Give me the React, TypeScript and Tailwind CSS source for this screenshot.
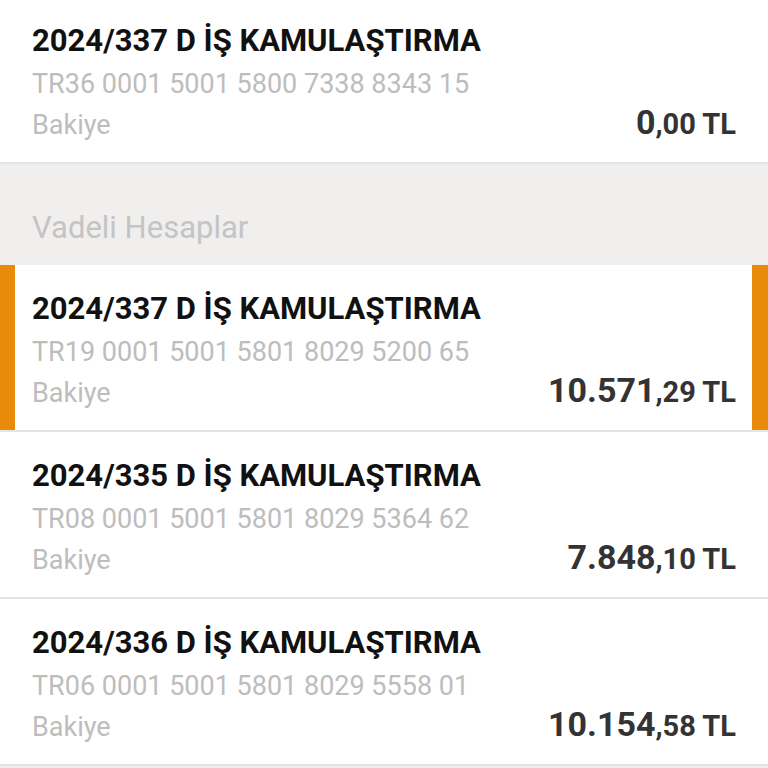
import React from 'react';

type Account = {
  title: string;
  iban: string;
  whole: string;
  cents: string;
  selected?: boolean;
};

const current: Account[] = [
  { title: '2024/337 D İŞ KAMULAŞTIRMA', iban: 'TR36 0001 5001 5800 7338 8343 15', whole: '0', cents: '00' },
];

const term: Account[] = [
  { title: '2024/337 D İŞ KAMULAŞTIRMA', iban: 'TR19 0001 5001 5801 8029 5200 65', whole: '10.571', cents: '29', selected: true },
  { title: '2024/335 D İŞ KAMULAŞTIRMA', iban: 'TR08 0001 5001 5801 8029 5364 62', whole: '7.848', cents: '10' },
  { title: '2024/336 D İŞ KAMULAŞTIRMA', iban: 'TR06 0001 5001 5801 8029 5558 01', whole: '10.154', cents: '58' },
];

const AccountRow = ({ acc }: { acc: Account }) => (
  <div className="flex bg-white border-b-2 border-[#e4e4e4]">
    <div className={acc.selected ? 'w-[15px] shrink-0 bg-[#e88b0c]' : 'w-[15px] shrink-0'} />
    <div className="flex-1 pl-[17px] pr-[16px] pt-[26px] pb-[24px]">
      <div className="text-[31px] leading-[36px] font-bold text-[#111111] whitespace-nowrap">{acc.title}</div>
      <div className="mt-[9px] text-[27px] leading-[32px] text-[#bdbdbd] whitespace-nowrap">{acc.iban}</div>
      <div className="mt-[6px] flex items-baseline justify-between h-[32px]">
        <span className="text-[27px] leading-[32px] text-[#bdbdbd]">Bakiye</span>
        <span className="font-bold text-[#333333] leading-[32px] whitespace-nowrap">
          <span className="text-[34px]">{acc.whole}</span>
          <span className="text-[29px]">,{acc.cents} TL</span>
        </span>
      </div>
    </div>
    <div className={acc.selected ? 'w-[16px] shrink-0 bg-[#e88b0c]' : 'w-[16px] shrink-0'} />
  </div>
);

export default function App() {
  return (
    <div className="w-[768px] h-[768px] overflow-hidden bg-[#f0efee]" style={{ fontFamily: 'Roboto, "Noto Sans", sans-serif' }}>
      <div className="-mt-[3px]">
        {current.map((a, i) => (
          <AccountRow key={i} acc={a} />
        ))}
      </div>
      <div className="h-[101px] px-8 pt-[46px] text-[31px] leading-[36px] text-[#c4c4c4]">Vadeli Hesaplar</div>
      {term.map((a, i) => (
        <AccountRow key={i} acc={a} />
      ))}
    </div>
  );
}
